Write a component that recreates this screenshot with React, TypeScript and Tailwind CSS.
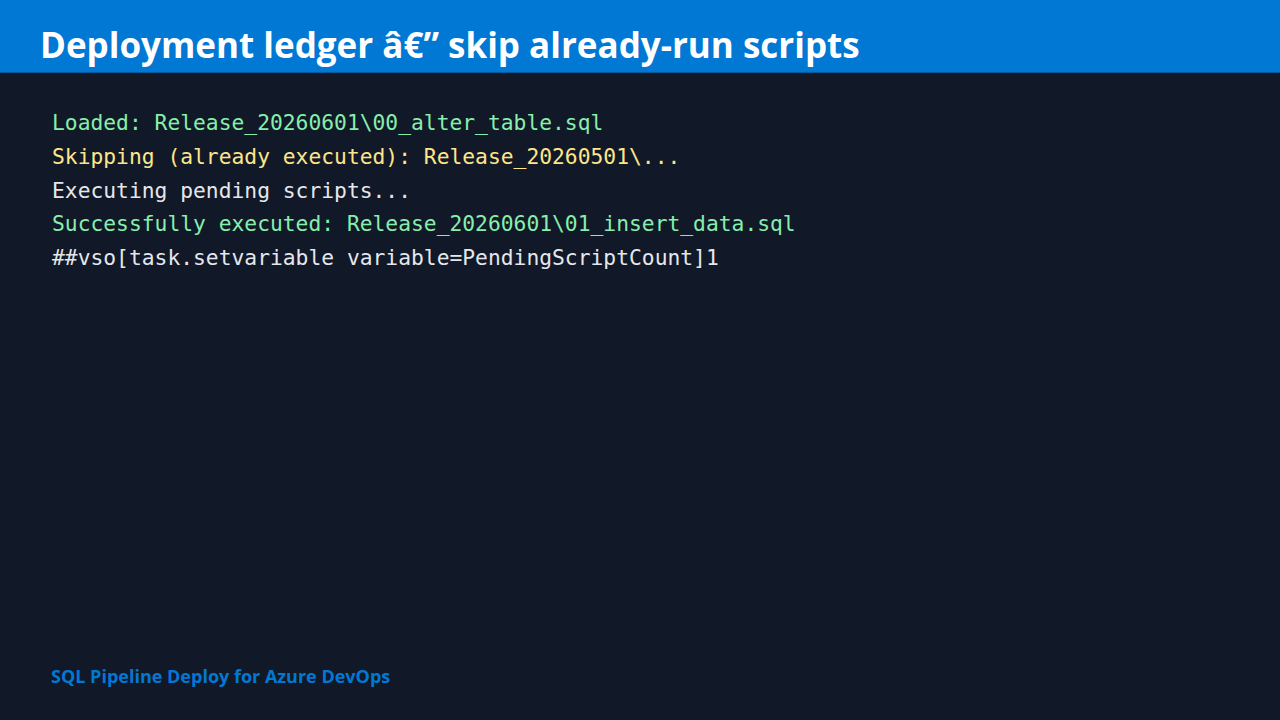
const lines = [
  { text: "Loaded: Release_20260601\\00_alter_table.sql", color: "text-[#86efac]" },
  { text: "Skipping (already executed): Release_20260501\\...", color: "text-[#fde68a]" },
  { text: "Executing pending scripts...", color: "text-[#e5e7eb]" },
  { text: "Successfully executed: Release_20260601\\01_insert_data.sql", color: "text-[#86efac]" },
  { text: "##vso[task.setvariable variable=PendingScriptCount]1", color: "text-[#e5e7eb]" },
];

const App = () => {
  return (
    <div className="w-[1280px] h-[720px] bg-[#111827] flex flex-col font-['Open_Sans',sans-serif]">
      <header className="h-[73px] bg-[#0078d4] border-b border-[#005a9e] flex items-center pt-4 px-10 shrink-0">
        <h1 className="text-[35px] leading-none font-bold text-white">Deployment ledger â€” skip already-run scripts</h1>
      </header>
      <main className="flex-1 px-[52px] pt-[33px] font-['DejaVu_Sans_Mono',monospace] text-[21.3px] leading-[33.8px] whitespace-pre">
        {lines.map((l, i) => (
          <div key={i} className={l.color}>{l.text}</div>
        ))}
      </main>
      <footer className="px-[51px] pb-[30px] text-[18px] font-bold text-[#0078d4]">
        SQL Pipeline Deploy for Azure DevOps
      </footer>
    </div>
  );
};

export default App;
